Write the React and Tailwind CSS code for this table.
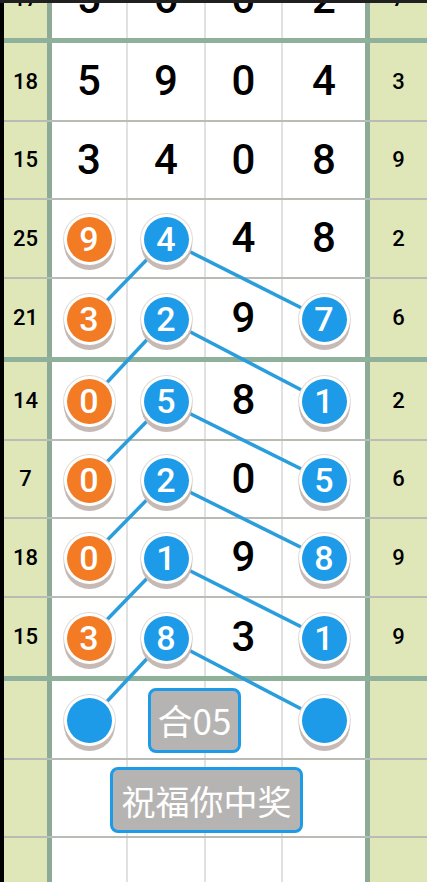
import React from "react";

// o = orange ball, b = blue ball, plain strings are black digits
const rows = [
  { left: "17", right: "7", cells: ["5", "6", "0", "2"], end: true },
  { left: "18", right: "3", cells: ["5", "9", "0", "4"] },
  { left: "15", right: "9", cells: ["3", "4", "0", "8"] },
  { left: "25", right: "2", cells: [{ o: "9" }, { b: "4" }, "4", "8"] },
  { left: "21", right: "6", cells: [{ o: "3" }, { b: "2" }, "9", { b: "7" }], end: true },
  { left: "14", right: "2", cells: [{ o: "0" }, { b: "5" }, "8", { b: "1" }] },
  { left: "7", right: "6", cells: [{ o: "0" }, { b: "2" }, "0", { b: "5" }] },
  { left: "18", right: "9", cells: [{ o: "0" }, { b: "1" }, "9", { b: "8" }] },
  { left: "15", right: "9", cells: [{ o: "3" }, { b: "8" }, "3", { b: "1" }], end: true },
  { left: "", right: "", cells: [{ b: "" }, "", "", { b: "" }], tag: "sum" },
  { left: "", right: "", cells: ["", "", "", ""], tag: "wish" },
  { left: "", right: "", cells: ["", "", "", ""] },
];

const widths = ["w-[76px] border-r-2", "w-[78px] border-r-2", "w-[77px] border-r-2", "w-[82px]"];
const centersX = [89, 166, 166, 324];

// work out where each row's middle sits on the page, for the connecting lines
const centersY = [];
let top = -40.5;
rows.forEach((r) => {
  const content = r.end ? 78.5 : 76.5;
  centersY.push(top + content / 2 + 1.5);
  top += r.end ? 83.5 : 78.5;
});

const links = [];
rows.forEach((r, i) => {
  const next = rows[i + 1];
  if (!next) return;
  if (r.cells[1] && r.cells[1].b !== undefined) {
    [0, 3].forEach((c) => {
      if (typeof next.cells[c] === "object") {
        links.push([centersX[1], centersY[i], centersX[c], centersY[i + 1]]);
      }
    });
  }
});

const Ball = ({ color, value }) => (
  <div className="relative z-20 mt-[3px] w-[51px] h-[51px] shrink-0 rounded-full bg-white shadow-[0_5px_0_#c6bab6,0_0_0_1px_#e2dbd8] flex items-center justify-center">
    <div
      className={`w-[45px] h-[45px] rounded-full flex items-center justify-center text-white text-[34px] font-medium ${
        color === "o" ? "bg-[#f27b24]" : "bg-[#1d9be8]"
      }`}
    >
      {value}
    </div>
  </div>
);

const Cell = ({ value, width }) => {
  let inner = null;
  if (typeof value === "object") {
    const color = value.o !== undefined ? "o" : "b";
    inner = <Ball color={color} value={value.o ?? value.b} />;
  } else if (value) {
    inner = <span className="text-[42px] leading-none font-medium text-black">{value}</span>;
  }
  return (
    <div className={`${width} h-full border-[#e1e1e1] bg-white flex items-center justify-center`}>
      {inner}
    </div>
  );
};

const Row = ({ row }) => (
  <div
    className={`flex ${
      row.end ? "h-[83.5px] border-b-[5px] border-[#8fb09a]" : "h-[78.5px] border-b-2 border-[#b9bcb4]"
    }`}
  >
    <div className="w-[43px] h-full bg-[#dfe7b9] flex items-center justify-center text-[22px] font-medium text-black">
      {row.left}
    </div>
    <div className="w-[5px] h-full bg-[#8daa96]" />
    <div className="relative flex h-full">
      {row.cells.map((v, i) => (
        <Cell key={i} value={v} width={widths[i]} />
      ))}
      {row.tag === "sum" && (
        <div className="absolute left-[96px] top-[7px] z-20 w-[93px] h-[65px] rounded-[8px] border-[3px] border-[#1e9be6] bg-[#b6b4b3] flex items-center justify-center text-white text-[35px] font-['Noto_Sans_CJK_SC',sans-serif]">
          合05
        </div>
      )}
      {row.tag === "wish" && (
        <div className="absolute left-[58px] top-[7.5px] z-20 w-[193px] h-[66px] rounded-[8px] border-[3px] border-[#1e9be6] bg-[#b6b4b3] flex items-center justify-center text-white text-[34px] font-['Noto_Sans_CJK_SC',sans-serif]">
          祝福你中奖
        </div>
      )}
    </div>
    <div className="w-[5px] h-full bg-[#8daa96]" />
    <div className="w-[57px] h-full bg-[#dfe7b9] flex items-center justify-center text-[22px] font-medium text-black">
      {row.right}
    </div>
  </div>
);

const App = () => {
  return (
    <div className="relative w-[427px] h-[882px] overflow-hidden bg-white flex font-[Roboto,sans-serif]">
      <div className="w-[4px] h-full bg-black shrink-0" />
      <div className="flex-1">
        <div className="-mt-[40.5px]">
          {rows.map((r, i) => (
            <Row key={i} row={r} />
          ))}
        </div>
      </div>
      <svg className="absolute left-0 top-0 z-10 pointer-events-none" width="427" height="882">
        {links.map(([x1, y1, x2, y2], i) => (
          <line key={i} x1={x1} y1={y1} x2={x2} y2={y2} stroke="#2a9ddc" strokeWidth="3.5" />
        ))}
      </svg>
      <div className="absolute left-0 top-0 w-full h-[3px] bg-[#202020] z-30" />
    </div>
  );
};

export default App;
